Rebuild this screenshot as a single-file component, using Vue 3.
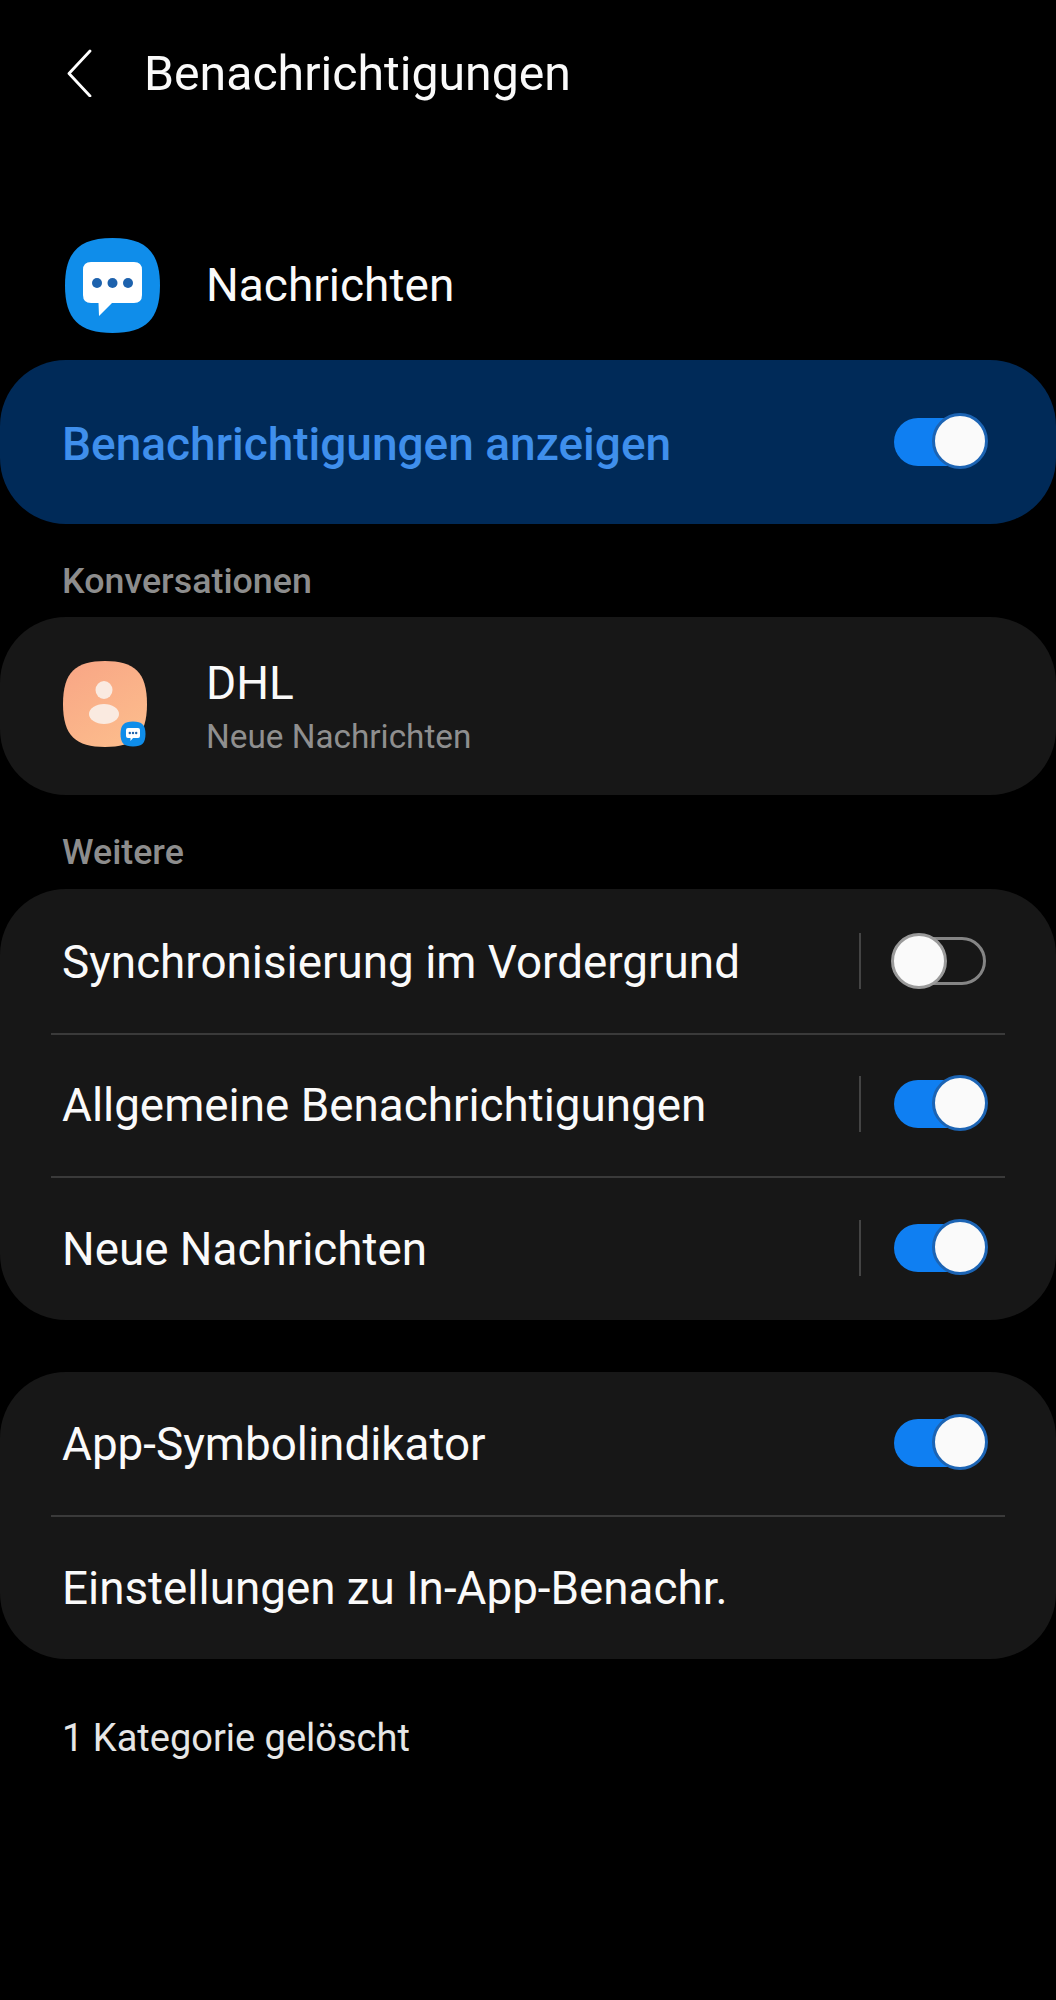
<script setup>
const groupOne = [
  { label: 'Synchronisierung im Vordergrund', on: false },
  { label: 'Allgemeine Benachrichtigungen', on: true },
  { label: 'Neue Nachrichten', on: true },
]
</script>

<template>
  <div class="page">
    <header class="top">
      <svg class="back" width="28" height="48" viewBox="0 0 28 48">
        <path d="M25 2 L4 24.5 L25 47" fill="none" stroke="#fff" stroke-width="2.8" stroke-linecap="round" stroke-linejoin="round" />
      </svg>
      <h1 class="title">Benachrichtigungen</h1>
    </header>

    <div class="app">
      <svg class="app-icon" width="97" height="97" viewBox="0 0 97 97">
        <path d="M48.500 1C82 1 96 15 96 48.500C96 82 82 96 48.500 96C15 96 1 82 1 48.500C1 15 15 1 48.500 1Z" fill="#0f8dea" />
        <path d="M27 25H70Q78 25 78 33V58Q78 66 70 66H48L35 79L34.500 66H27Q19 66 19 58V33Q19 25 27 25Z" fill="#fff" />
        <circle cx="33" cy="46" r="5" fill="#1d62ad" />
        <circle cx="48.500" cy="46" r="5" fill="#1d62ad" />
        <circle cx="64" cy="46" r="5" fill="#1d62ad" />
      </svg>
      <span class="app-name">Nachrichten</span>
    </div>

    <div class="master">
      <span class="master-label">Benachrichtigungen anzeigen</span>
      <span class="toggle on master-toggle"><i class="knob"></i></span>
    </div>

    <div class="caption caption-first">Konversationen</div>
    <section class="card convo">
      <div class="avatar">
        <svg width="86" height="88" viewBox="0 0 86 88">
          <defs>
            <linearGradient id="peach" x1="0" y1="0" x2="0.6" y2="1">
              <stop offset="0" stop-color="#f8a585" />
              <stop offset="1" stop-color="#fcbb8c" />
            </linearGradient>
          </defs>
          <path d="M43 1C72 1 85 12 85 44C85 76 72 87 43 87C14 87 1 76 1 44C1 12 14 1 43 1Z" fill="url(#peach)" />
          <ellipse cx="42" cy="30" rx="8.500" ry="9" fill="#faeae0" />
          <ellipse cx="42" cy="54" rx="15" ry="10" fill="#faeae0" />
        </svg>
        <svg class="badge" width="26" height="26" viewBox="0 0 26 26">
          <path d="M13 0.500C22 0.500 25.500 4 25.500 13C25.500 22 22 25.500 13 25.500C4 25.500 0.500 22 0.500 13C0.500 4 4 0.500 13 0.500Z" fill="#0f8dea" />
          <path d="M8 7H18Q20 7 20 9V15Q20 17 18 17H13L10.500 20V17H8Q6 17 6 15V9Q6 7 8 7Z" fill="#fff" />
          <circle cx="9.800" cy="12" r="1.200" fill="#1d62ad" />
          <circle cx="13" cy="12" r="1.200" fill="#1d62ad" />
          <circle cx="16.200" cy="12" r="1.200" fill="#1d62ad" />
        </svg>
      </div>
      <div class="convo-text">
        <span class="convo-name">DHL</span>
        <span class="convo-sub">Neue Nachrichten</span>
      </div>
    </section>

    <div class="caption caption-second">Weitere</div>
    <section class="card list-card">
      <div v-for="row in groupOne" :key="row.label" class="row">
        <span class="row-label">{{ row.label }}</span>
        <span class="vbar"></span>
        <span class="toggle" :class="{ on: row.on }"><i class="knob"></i></span>
      </div>
    </section>

    <section class="card second-card">
      <div class="row">
        <span class="row-label">App-Symbolindikator</span>
        <span class="toggle on"><i class="knob"></i></span>
      </div>
      <div class="row">
        <span class="row-label">Einstellungen zu In-App-Benachr.</span>
      </div>
    </section>

    <p class="footnote">1 Kategorie gelöscht</p>
  </div>
</template>

<style scoped>
.page {
  width: 1056px;
  height: 2000px;
  background: #000;
  color: #fafafa;
  font-family: Roboto, "Liberation Sans", sans-serif;
  overflow: hidden;
}
.top {
  display: flex;
  align-items: center;
  height: 146px;
  padding-left: 65px;
}
.back { flex: none; }
.title {
  margin: 0 0 0 51px;
  font-size: 48.2px;
  font-weight: 400;
  letter-spacing: 0;
}
.app {
  display: flex;
  align-items: center;
  height: 97px;
  margin-top: 91px;
  padding-left: 64px;
}
.app-icon { flex: none; }
.app-name {
  margin: 0 0 2px 45px;
  font-size: 46px;
}
.master {
  display: flex;
  align-items: center;
  justify-content: space-between;
  height: 164px;
  margin-top: 26px;
  padding: 0 70px 0 62px;
  border-radius: 66px;
  background: #002a58;
}
.master-label {
  padding-top: 3px;
  font-size: 46px;
  font-weight: 500;
  color: #3f8fec;
}
.caption {
  padding-left: 62px;
  font-size: 35.8px;
  font-weight: 500;
  line-height: 40px;
  color: #8d8d8d;
}
.caption-first { margin-top: 37px; }
.caption-second { margin-top: 37px; }
.card {
  position: relative;
  background: #171717;
  border-radius: 66px;
  margin-top: 16px;
}
.convo {
  display: flex;
  align-items: center;
  height: 178px;
  padding-left: 62px;
}
.list-card { margin-top: 17px; }
.avatar {
  position: relative;
  width: 86px;
  height: 88px;
  flex: none;
  margin-top: -5px;
}
.avatar > svg:first-child { display: block; }
.badge {
  position: absolute;
  right: 2px;
  bottom: 1px;
}
.convo-text {
  display: flex;
  flex-direction: column;
  margin-left: 58px;
}
.convo-name {
  font-size: 46px;
  line-height: 52px;
}
.convo-sub {
  font-size: 33.3px;
  line-height: 38px;
  margin-top: 9px;
  color: #8f8f8f;
}
.row {
  position: relative;
  display: flex;
  align-items: center;
  height: 143.5px;
  padding: 0 70px 0 62px;
}
.row + .row::before {
  content: "";
  position: absolute;
  top: 0;
  left: 51px;
  right: 51px;
  height: 2px;
  background: #3a3a3a;
}
.row-label {
  flex: 1;
  padding-top: 3px;
  font-size: 45.8px;
}
.vbar {
  width: 2px;
  height: 56px;
  margin-right: 33px;
  background: #444;
}
.toggle {
  position: relative;
  display: block;
  flex: none;
  width: 92px;
  height: 48px;
  box-sizing: border-box;
  border: 3px solid #858585;
  border-radius: 24px;
  background: transparent;
}
.toggle.on {
  border: none;
  background: #0f7ff2;
}
.knob {
  position: absolute;
  top: -7px;
  left: -6px;
  width: 56px;
  height: 56px;
  box-sizing: border-box;
  border: 3px solid #9a9a9a;
  border-radius: 50%;
  background: #fafafa;
}
.toggle.on .knob {
  top: -5px;
  left: auto;
  right: -2px;
  width: 56px;
  height: 56px;
  border-color: #1c64b4;
}
.second-card { margin-top: 52px; }
.footnote {
  margin: 57px 0 0;
  padding-left: 62px;
  font-size: 38px;
  color: #e6e6e6;
}
</style>
